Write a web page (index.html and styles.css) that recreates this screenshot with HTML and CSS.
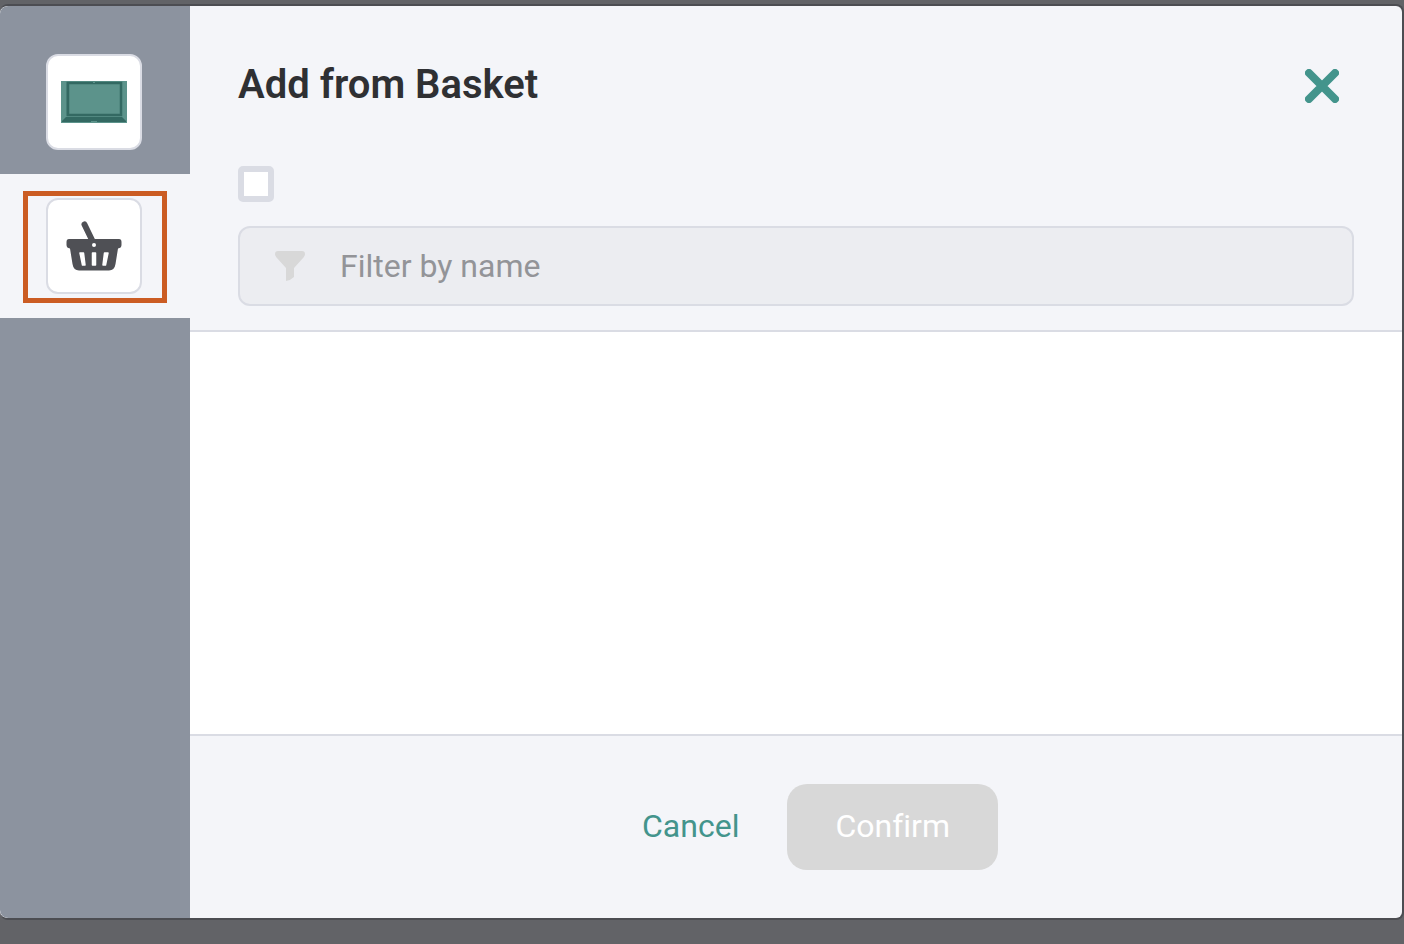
FILE: index.html
```html
<!DOCTYPE html>
<html lang="en">
	<head>
		<meta charset="UTF-8">
		<meta name="viewport" content="width=device-width, initial-scale=1">
		<title>Add from Basket</title>
		<link rel="stylesheet" href="styles.css">
	</head>
	<body>
		<div class="dialog" role="dialog" aria-labelledby="dialog-title">
			<nav class="sidebar">
				<div class="tab">
					<button class="tile" type="button" aria-label="My computer">
						<svg class="icon-laptop" viewBox="0 0 66 42">
							<rect width="66" height="42" fill="#5c938b"/>
							<rect x="5" y="1" width="56" height="34" fill="#4d857d"/>
							<rect x="7" y="2" width="53" height="32" fill="#5c938b" stroke="#336962" stroke-width="2.500"/>
							<rect x="32" y="1" width="2" height="1" fill="#5c938b"/>
							<path d="M5 36H61L65 40V41H1V40Z" fill="#336962"/>
							<rect x="30" y="40" width="6" height="1" fill="#5c938b"/>
						</svg>
					</button>
				</div>
				<div class="tab active">
					<button class="tile" type="button" aria-label="Basket">
						<svg class="icon-basket" viewBox="0 0 56 50">
							<path d="M18.500 3.500L26 19" stroke="#4f5055" stroke-width="6" stroke-linecap="round"/>
							<path d="M3 18H53Q55.500 18 55.500 21V24Q55.500 27 52 27.500L49.500 43Q48.500 49.500 43 49.500H13Q7.500 49.500 6.500 43L4 27.500Q0.500 27 0.500 24V21Q0.500 18 3 18Z" fill="#4f5055"/>
							<circle cx="28" cy="24" r="2" fill="#fff"/>
							<path d="M14 32H17.500L19 44H16.500ZM26.500 32H29.500V44H26.500ZM38.500 32H42L39.500 44H37Z" fill="#fff" stroke="#fff" stroke-width="1.500" stroke-linejoin="round"/>
						</svg>
					</button>
					<span class="highlight"></span>
				</div>
			</nav>
			<div class="main">
				<div class="header">
					<div class="title-row">
						<h1 id="dialog-title">Add from Basket</h1>
						<button class="close" type="button" aria-label="Close">
							<svg viewBox="0 0 34 34">
								<path d="M4 4L30 30M30 4L4 30" stroke="currentColor" stroke-width="8" stroke-linecap="round"/>
							</svg>
						</button>
					</div>
					<input class="check-all" type="checkbox" aria-label="Select all">
					<label class="filter">
						<svg class="icon-filter" viewBox="0 0 30 30">
							<path d="M3 0H27Q30 0 30 3Q30 4.500 28.500 6.500L19 17V26Q16 29 11 30V17L1.500 6.500Q0 4.500 0 3Q0 0 3 0Z" fill="#d8d8d8"/>
						</svg>
						<input type="text" placeholder="Filter by name" aria-label="Filter by name">
					</label>
				</div>
				<div class="content"></div>
				<div class="footer">
					<button class="btn cancel" type="button">Cancel</button>
					<button class="btn confirm" type="button" disabled>Confirm</button>
				</div>
			</div>
		</div>
	</body>
</html>
```

FILE: styles.css
```css
*{
	margin: 0;
	padding: 0;
	box-sizing: border-box;
}
body{
	display: flex;
	min-height: 100vh;
	padding: 4px 0 24px;
	background: #626367;
	font-family: Roboto, "Liberation Sans", sans-serif;
	font-size: 32px;
	line-height: 40px;
	font-variant-ligatures: none;
}
button, input{
	font: inherit;
	font-variant-ligatures: inherit;
	border: none;
	background: none;
}
button{
	cursor: pointer;
}
svg{
	display: block;
	fill: none;
}
.dialog{
	flex: 1;
	display: flex;
	border: 2px solid #4c4d52;
	border-left: none;
	border-radius: 8px;
	overflow: hidden;
	background: #f4f5f9;
}

/* sidebar */
.sidebar{
	width: 190px;
	background: #8c939f;
	border-radius: 8px 0 0 8px;
}
.tab{
	position: relative;
	padding: 24px 46px;
}
.tab:first-child{
	padding-top: 48px;
}
.tab.active{
	background: #f4f5f9;
}
.tile{
	display: flex;
	align-items: center;
	justify-content: center;
	width: 96px;
	height: 96px;
	background: #fff;
	border: 2px solid #dadce4;
	border-radius: 12px;
}
.icon-laptop{
	width: 66px;
	height: 42px;
}
.icon-basket{
	width: 56px;
	height: 50px;
}
.highlight{
	position: absolute;
	top: 17px;
	left: 23px;
	width: 144px;
	height: 112px;
	border: 5px solid #cb5c23;
	pointer-events: none;
}

/* main */
.main{
	flex: 1;
	display: flex;
	flex-direction: column;
	min-width: 0;
}
.header{
	padding: 54px 48px 24px;
	border-bottom: 2px solid #dadce4;
}
.title-row{
	display: flex;
	align-items: center;
	justify-content: space-between;
	height: 52px;
	padding-right: 15px;
	margin-bottom: 54px;
}
h1{
	padding-bottom: 2px;
	color: #2f3033;
	font-size: 40px;
	font-weight: 600;
	line-height: 48px;
}
.close{
	color: #43948c;
}
.close svg{
	width: 34px;
	height: 34px;
}
.check-all{
	appearance: none;
	display: block;
	width: 36px;
	height: 36px;
	margin-bottom: 24px;
	background: #fff;
	border: 6px solid #dadce4;
	border-radius: 5px;
}
.check-all:checked{
	background: #43948c;
}
.filter{
	display: flex;
	align-items: center;
	gap: 35px;
	height: 80px;
	padding: 0 35px;
	background: #ecedf1;
	border: 2px solid #dadce4;
	border-radius: 12px;
}
.icon-filter{
	width: 30px;
	height: 30px;
}
.filter input{
	flex: 1;
	min-width: 0;
	color: #2f3033;
	outline: none;
}
.filter input::placeholder{
	color: #939498;
	opacity: 1;
}
.content{
	flex: 1;
	background: #fff;
}
.footer{
	display: flex;
	justify-content: center;
	padding: 48px;
	border-top: 2px solid #dadce4;
}
.btn{
	height: 86px;
	padding: 0 48px 2px;
	border-radius: 20px;
}
.cancel{
	color: #43948c;
}
.confirm{
	color: #fff;
	background: #d8d8d8;
	cursor: default;
}
```
